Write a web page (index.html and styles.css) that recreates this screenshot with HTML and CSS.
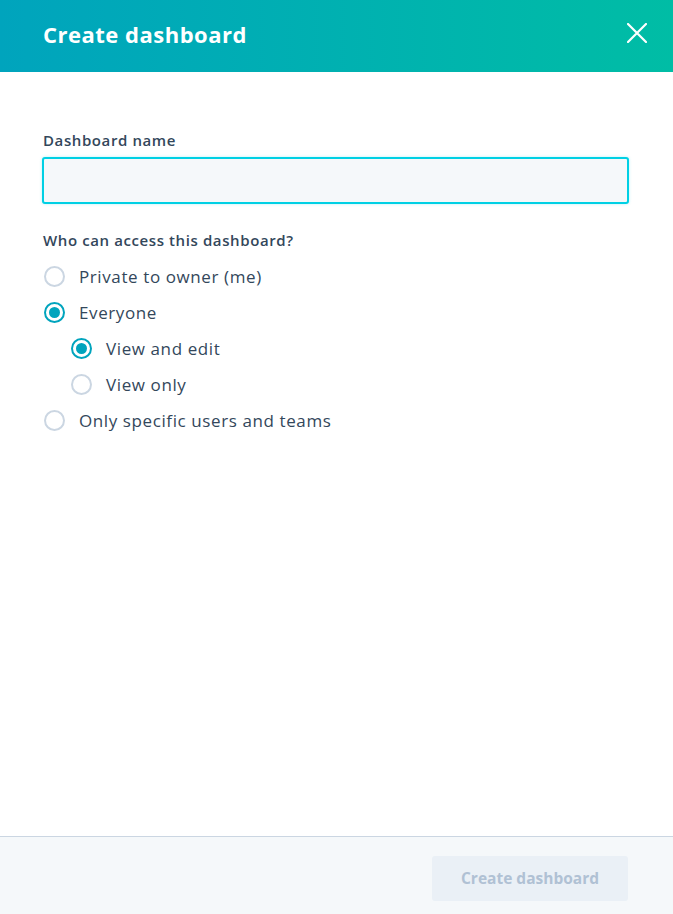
FILE: index.html
```html
<!DOCTYPE html>
<html>
<head>
<meta charset="utf-8">
<link rel="stylesheet" href="styles.css">
</head>
<body>
<div class="modal">
  <header class="header">
    <h1 class="title">Create dashboard</h1>
    <button class="close" aria-label="Close">
      <svg width="20" height="20" viewBox="0 0 20 20"><path d="M1 1L19 19M19 1L1 19" stroke="#fff" stroke-width="2.2" stroke-linecap="round"/></svg>
    </button>
  </header>
  <main class="body">
    <label class="label">Dashboard name</label>
    <div class="input"></div>
    <div class="label access">Who can access this dashboard?</div>
    <ul class="radios">
      <li class="radio"><span class="dot"></span><span>Private to owner (me)</span></li>
      <li class="radio checked"><span class="dot"></span><span>Everyone</span></li>
      <li class="radio checked nested"><span class="dot"></span><span>View and edit</span></li>
      <li class="radio nested"><span class="dot"></span><span>View only</span></li>
      <li class="radio"><span class="dot"></span><span>Only specific users and teams</span></li>
    </ul>
  </main>
  <footer class="footer">
    <button class="primary" disabled>Create dashboard</button>
  </footer>
</div>
</body>
</html>
```
FILE: styles.css
```css
* { box-sizing: border-box; }
html, body { margin: 0; padding: 0; height: 100%; }
body {
  font-family: "Open Sans", "Noto Sans", sans-serif;
  color: #33475b;
  background: #fff;
}
.modal {
  display: flex;
  flex-direction: column;
  height: 914px;
}
.header {
  height: 72px;
  flex: none;
  background: linear-gradient(90deg, #00a4bd 0%, #00bda5 100%);
  display: flex;
  align-items: center;
  justify-content: space-between;
  padding: 0 26px 4px 43px;
}
.title {
  margin: 0;
  color: #fff;
  font-size: 22px;
  font-weight: 700;
  letter-spacing: 0.5px;
}
.close {
  background: none;
  border: 0;
  padding: 0;
  width: 20px;
  height: 20px;
  display: flex;
  margin-bottom: 2px;
}
.body {
  flex: 1;
  padding: 58px 44px 0 42px;
}
.label {
  display: block;
  font-size: 15px;
  font-weight: 600;
  margin-left: 1px;
  line-height: 20px;
  letter-spacing: 0.6px;
}
.input {
  margin-top: 7px;
  height: 47px;
  width: 587px;
  background: #f5f8fa;
  border: 2px solid #00d0e4;
  border-radius: 3px;
  box-shadow: 0 0 3px rgba(0, 208, 228, 0.3);
}
.access { margin-top: 26px; }
.radios {
  list-style: none;
  margin: 8px 0 0;
  padding: 0;
}
.radio {
  display: flex;
  align-items: center;
  height: 36px;
  font-size: 17px;
  gap: 14px;
  padding-left: 2px;
  letter-spacing: 0.6px;
}
.radio.nested { padding-left: 29px; }
.dot {
  width: 21px;
  height: 21px;
  border-radius: 50%;
  border: 2px solid #cbd6e2;
  background: #fff;
  display: flex;
  align-items: center;
  justify-content: center;
  flex: none;
}
.checked .dot { border-color: #00a4bd; }
.checked .dot::after {
  content: "";
  width: 11px;
  height: 11px;
  border-radius: 50%;
  background: #00a4bd;
}
.footer {
  flex: none;
  height: 78px;
  background: #f5f8fa;
  border-top: 1px solid #cbd6e2;
  display: flex;
  align-items: center;
  justify-content: flex-end;
  padding: 0 45px 0 0;
}
.primary {
  width: 196px;
  height: 45px;
  border: 0;
  border-radius: 3px;
  background: #eaf0f6;
  color: #b0c1d4;
  font-family: inherit;
  font-size: 15.5px;
  font-weight: 700;
  margin-top: 5px;
}
```
